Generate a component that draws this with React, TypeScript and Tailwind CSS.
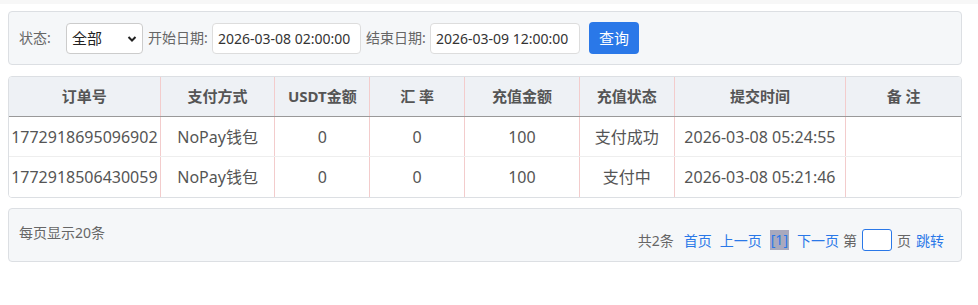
import React from 'react'

const cols = [
  { title: '订单号', w: 'w-[152px]' },
  { title: '支付方式', w: 'w-[115px]' },
  { title: 'USDT金额', w: 'w-[95px]' },
  { title: '汇 率', w: 'w-[95px]' },
  { title: '充值金额', w: 'w-[115px]' },
  { title: '充值状态', w: 'w-[95px]' },
  { title: '提交时间', w: 'w-[172px]' },
  { title: '备 注', w: 'w-[115px]' },
]

const rows = [
  ['1772918695096902', 'NoPay钱包', '0', '0', '100', '支付成功', '2026-03-08 05:24:55', ''],
  ['1772918506430059', 'NoPay钱包', '0', '0', '100', '支付中', '2026-03-08 05:21:46', ''],
]

const font = { fontFamily: '"Noto Sans", "Noto Sans CJK SC", sans-serif' }

export default function App() {
  return (
    <div className="w-[978px] h-[305px] bg-white text-[#555]" style={font}>
      <div className="h-[4px] bg-[#f7f7f7]" />

      {/* search bar */}
      <div className="ml-2 mt-[7px] w-[954px] h-[54px] rounded border border-[#dcdfe3] bg-[#f5f7f9] flex items-center pl-[10px]">
        <span className="text-[14px] text-[#666] leading-none w-[47px]">状态:</span>
        <div className="relative w-[77px] h-[31px] rounded border border-[#ccc] bg-white flex items-center pl-[5px]">
          <span className="text-[15px] text-[#222] leading-none">全部</span>
          <svg className="absolute right-[5px] top-[11px]" width="10" height="8" viewBox="0 0 10 8">
            <path d="M1.5 2 L5 5.5 L8.5 2" fill="none" stroke="#222" strokeWidth="2" />
          </svg>
        </div>
        <span className="ml-[5px] text-[14px] text-[#666] leading-none w-[64px]">开始日期:</span>
        <div className="w-[149px] h-[31px] rounded border border-[#ddd] bg-white flex items-center pl-[5px] text-[14px] text-[#333]">
          2026-03-08 02:00:00
        </div>
        <span className="ml-[5px] text-[14px] text-[#666] leading-none w-[64px]">结束日期:</span>
        <div className="w-[150px] h-[31px] rounded border border-[#ddd] bg-white flex items-center pl-[5px] text-[14px] text-[#333]">
          2026-03-09 12:00:00
        </div>
        <button className="ml-[9px] w-[50px] h-[32px] rounded bg-[#2a78e8] text-white text-[15px] leading-none">
          查询
        </button>
      </div>

      {/* table */}
      <div className="ml-2 mt-[11px] w-[954px] rounded border border-[#dcdfe3] overflow-hidden">
        <div className="flex h-[40px] bg-[#eef1f5] border-b border-[#999]">
          {cols.map((c, i) => (
            <div
              key={c.title}
              className={`${c.w} flex items-center justify-center text-[15px] font-bold text-[#555] ${i < cols.length - 1 ? 'border-r border-[#f3cccc]' : ''}`}
            >
              {c.title}
            </div>
          ))}
        </div>
        {rows.map((r, ri) => (
          <div key={ri} className={`flex h-[40px] bg-white ${ri === 0 ? 'border-b border-[#eee]' : ''}`}>
            {r.map((v, i) => (
              <div
                key={i}
                className={`${cols[i].w} flex items-center justify-center text-[16px] text-[#555] whitespace-nowrap ${i < r.length - 1 ? 'border-r border-[#f3cccc]' : ''}`}
              >
                {v}
              </div>
            ))}
          </div>
        ))}
      </div>

      {/* pager */}
      <div className="ml-2 mt-[10px] w-[954px] h-[54px] rounded border border-[#dcdfe3] bg-[#f5f7f9] flex items-center justify-between pl-[10px] pr-[17px] text-[14px]">
        <span className="text-[#666] -mt-[6px]">每页显示20条</span>
        <div className="flex items-center mt-[10px]">
          <span className="text-[#666]">共2条</span>
          <span className="ml-[10px] text-[#2a78e8]">首页</span>
          <span className="ml-[8px] text-[#2a78e8]">上一页</span>
          <span className="ml-[8px] px-[1px] bg-[#a9a9bd] text-[#2a78e8] leading-[20px]">[1]</span>
          <span className="ml-[8px] text-[#2a78e8]">下一页</span>
          <span className="ml-[4px] text-[#666]">第</span>
          <span className="ml-[5px] w-[30px] h-[22px] rounded-[3px] border border-[#2a78e8] bg-white" />
          <span className="ml-[5px] text-[#666]">页</span>
          <span className="ml-[5px] text-[#2a78e8]">跳转</span>
        </div>
      </div>
    </div>
  )
}
